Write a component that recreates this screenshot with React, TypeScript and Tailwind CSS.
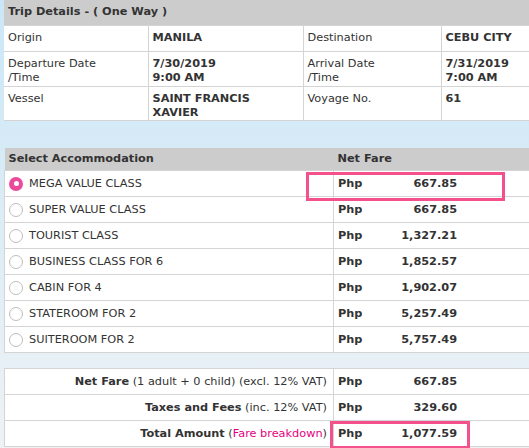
import React from 'react';

const FONT = { fontFamily: '"DejaVu Sans", Verdana, sans-serif' };

const rooms: { name: string; fare: string; selected?: boolean }[] = [
  { name: 'MEGA VALUE CLASS', fare: '667.85', selected: true },
  { name: 'SUPER VALUE CLASS', fare: '667.85' },
  { name: 'TOURIST CLASS', fare: '1,327.21' },
  { name: 'BUSINESS CLASS FOR 6', fare: '1,852.57' },
  { name: 'CABIN FOR 4', fare: '1,902.07' },
  { name: 'STATEROOM FOR 2', fare: '5,257.49' },
  { name: 'SUITEROOM FOR 2', fare: '5,757.49' },
];

function Radio({ on }: { on?: boolean }) {
  if (on) {
    return (
      <span className="flex h-[14px] w-[14px] shrink-0 items-center justify-center rounded-full bg-[#ea4c9b]">
        <span className="h-[5px] w-[5px] rounded-full bg-white" />
      </span>
    );
  }
  return <span className="h-[14px] w-[14px] shrink-0 rounded-full border border-[#bdbdbd] bg-white" />;
}

function Amount({ value }: { value: string }) {
  return (
    <div className="flex font-bold">
      <span className="w-[60px]">Php</span>
      <span className="w-[59px] text-right">{value}</span>
    </div>
  );
}

export default function App() {
  const cell = 'border border-[#d4d4d4] bg-white px-[4px] align-top pt-[5px]';
  return (
    <div
      className="h-[448px] w-[529px] overflow-hidden bg-gradient-to-b from-[#cbe7f7] via-[#dcedf6] to-[#eef2f5] text-[11.3px] leading-[14px] text-[#333]"
      style={FONT}
    >
      <div className="w-[620px] pl-[4px]">
        {/* trip details */}
        <table className="w-[580px] border-collapse">
          <tbody>
            <tr className="h-[25px]">
              <td colSpan={4} className="bg-[#cccccc] px-[4px] align-middle font-bold">
                Trip Details - ( One Way )
              </td>
            </tr>
            <tr className="h-[26px]">
              <td className={`${cell} w-[144px] border-l-0`}>Origin</td>
              <td className={`${cell} w-[155px] font-bold`}>MANILA</td>
              <td className={`${cell} w-[138px]`}>Destination</td>
              <td className={`${cell} font-bold`}>CEBU CITY</td>
            </tr>
            <tr className="h-[35px]">
              <td className={`${cell} border-l-0`}>Departure Date<br />/Time</td>
              <td className={`${cell} font-bold`}>7/30/2019<br />9:00 AM</td>
              <td className={cell}>Arrival Date<br />/Time</td>
              <td className={`${cell} font-bold`}>7/31/2019<br />7:00 AM</td>
            </tr>
            <tr className="h-[34px]">
              <td className={`${cell} border-l-0`}>Vessel</td>
              <td className={`${cell} font-bold`}>SAINT FRANCIS<br />XAVIER</td>
              <td className={cell}>Voyage No.</td>
              <td className={`${cell} font-bold`}>61</td>
            </tr>
          </tbody>
        </table>

        {/* accommodation */}
        <table className="mt-[27px] w-[580px] border-collapse">
          <tbody>
            <tr className="h-[23px]">
              <td className="w-[329px] bg-[#cccccc] px-[4px] align-middle font-bold">Select Accommodation</td>
              <td className="bg-[#cccccc] px-[4px] align-middle font-bold">Net Fare</td>
            </tr>
            {rooms.map((r) => (
              <tr key={r.name} className="h-[26px]">
                <td className="border border-[#d4d4d4] bg-white px-[4px] align-middle">
                  <div className="flex items-center gap-[6px]">
                    <Radio on={r.selected} />
                    <span>{r.name}</span>
                  </div>
                </td>
                <td className="relative border border-[#d4d4d4] bg-white px-[4px] align-middle">
                  <Amount value={r.fare} />
                  {r.selected && (
                    <div className="absolute left-[-28px] top-[1px] z-10 h-[29px] w-[199px] border-[3px] border-[#f4508b]" />
                  )}
                </td>
              </tr>
            ))}
          </tbody>
        </table>

        {/* totals */}
        <table className="mt-[15px] w-[580px] border-collapse">
          <tbody>
            <tr className="h-[26px]">
              <td className="w-[329px] border border-[#d4d4d4] bg-white px-[6px] text-right align-middle">
                <b>Net Fare</b> (1 adult + 0 child) (excl. 12% VAT)
              </td>
              <td className="border border-[#d4d4d4] bg-white px-[4px] align-middle">
                <Amount value="667.85" />
              </td>
            </tr>
            <tr className="h-[26px]">
              <td className="border border-[#d4d4d4] bg-white px-[6px] text-right align-middle">
                <b>Taxes and Fees</b> (inc. 12% VAT)
              </td>
              <td className="border border-[#d4d4d4] bg-white px-[4px] align-middle">
                <Amount value="329.60" />
              </td>
            </tr>
            <tr className="h-[26px]">
              <td className="border border-[#d4d4d4] bg-white px-[6px] text-right align-middle">
                <b>Total Amount</b> (<span className="text-[#e6007e]">Fare breakdown</span>)
              </td>
              <td className="relative border border-[#d4d4d4] bg-white px-[4px] align-middle">
                <Amount value="1,077.59" />
                <div className="absolute left-[-4px] top-[0px] z-10 h-[28px] w-[140px] border-[3px] border-[#f4508b]" />
              </td>
            </tr>
          </tbody>
        </table>
      </div>
    </div>
  );
}
